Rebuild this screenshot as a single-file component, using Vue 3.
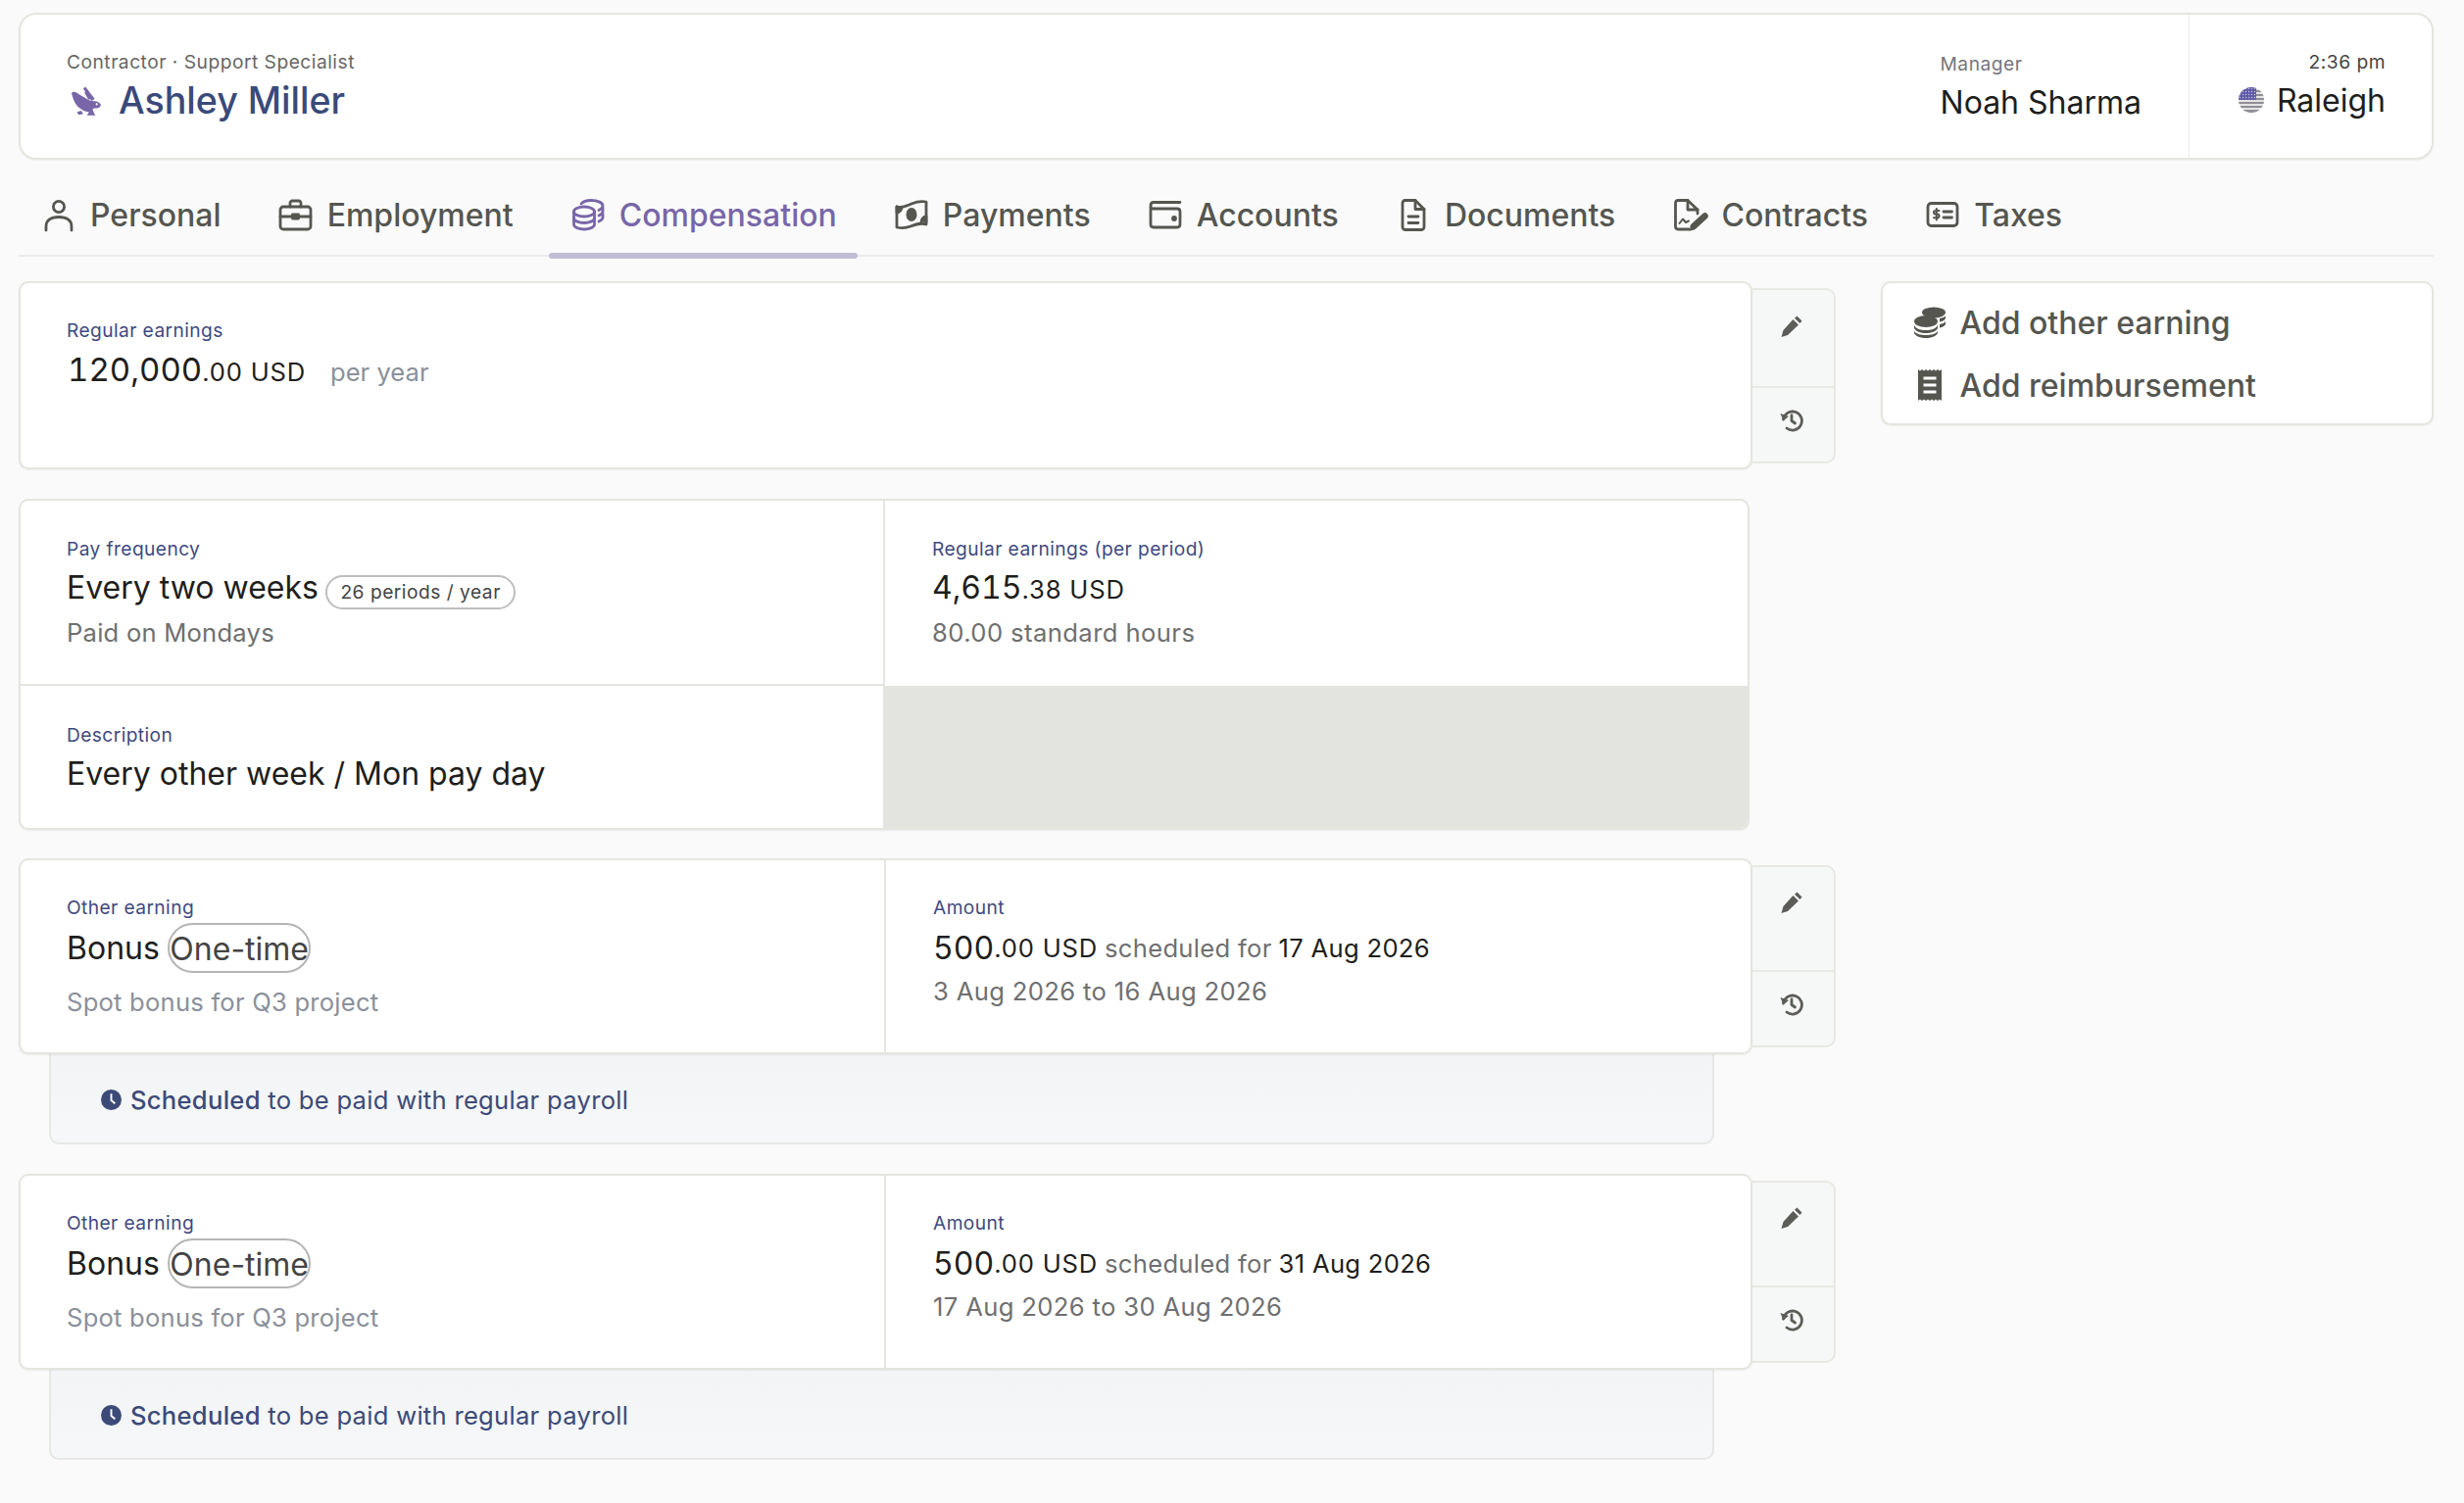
<script setup>
const tabs = [
  { label: 'Personal', icon: 'person' },
  { label: 'Employment', icon: 'case' },
  { label: 'Compensation', icon: 'coins', active: true },
  { label: 'Payments', icon: 'money' },
  { label: 'Accounts', icon: 'wallet' },
  { label: 'Documents', icon: 'file' },
  { label: 'Contracts', icon: 'sign' },
  { label: 'Taxes', icon: 'tax' }
]
const bonuses = [
  { date: '17 Aug 2026', range: '3 Aug 2026 to 16 Aug 2026' },
  { date: '31 Aug 2026', range: '17 Aug 2026 to 30 Aug 2026' }
]
</script>

<template>
  <div class="page">
    <header class="head">
      <div class="who">
        <div class="small grey">Contractor · Support Specialist</div>
        <div class="name">
          <svg class="rabbit" viewBox="30 18 100 96" fill="#7866a8">
            <path d="M36 42 C40 35 50 37 57 44 C66 50 78 56 90 64 L104 67 C113 65 121 68 127 78 C125 86 118 90 108 88 L101 92 L107 107 L111 111 L84 111 L90 100 C78 100 64 92 54 82 C44 70 40 58 36 42 Z"/>
            <path d="M72 28 L79 22 L108 60 L98 66 Z"/>
            <path d="M76 40 L82 36 L96 60 L88 62 Z"/>
            <path d="M53 100 L66 96 L72 106 L58 109 Z"/>
            <circle cx="114" cy="76" r="3.500" fill="#fff"/>
          </svg>
          <span>Ashley Miller</span>
        </div>
      </div>
      <div class="manager">
        <div class="small muted">Manager</div>
        <div class="big">Noah Sharma</div>
      </div>
      <div class="place">
        <div class="small dark">2:36 pm</div>
        <div class="city">
          <svg class="flag" viewBox="0 0 26 26">
            <defs>
              <clipPath id="flagc"><circle cx="13" cy="13" r="13"/></clipPath>
              <pattern id="stars" width="3" height="3" patternUnits="userSpaceOnUse">
                <rect width="3" height="3" fill="#5f5aa6"/>
                <circle cx="1.500" cy="1.500" r=".7" fill="#c9c8e0"/>
              </pattern>
            </defs>
            <g clip-path="url(#flagc)">
              <rect width="26" height="26" fill="#e4e4e4"/>
              <rect y="3" width="26" height="2" fill="#8f8f96"/>
              <rect y="7" width="26" height="2" fill="#8f8f96"/>
              <rect y="11" width="26" height="2" fill="#8f8f96"/>
              <rect y="15" width="26" height="2" fill="#8f8f96"/>
              <rect y="19" width="26" height="2" fill="#8f8f96"/>
              <rect y="23" width="26" height="3" fill="#8f8f96"/>
              <rect width="18" height="13" fill="url(#stars)"/>
            </g>
          </svg>
          <span>Raleigh</span>
        </div>
      </div>
    </header>

    <nav class="tabs">
      <div v-for="t in tabs" :key="t.label" class="tab" :class="{ active: t.active }">
        <svg class="tabicon" viewBox="0 0 32 32" fill="none" stroke="currentColor" stroke-width="2.800" stroke-linecap="round" stroke-linejoin="round">
          <template v-if="t.icon === 'person'">
            <circle cx="16" cy="8" r="5.600"/>
            <path d="M3 32 V28 C3 22 8 18.500 16 18.500 C24 18.500 29 22 29 28 V32"/>
          </template>
          <template v-else-if="t.icon === 'case'">
            <rect x="0" y="8" width="31" height="23" rx="3"/>
            <path d="M10 8 V4 C10 3 11 2 12 2 H19 C20 2 21 3 21 4 V8"/>
            <path d="M0 18 H12 M19 18 H31"/>
            <rect x="12.500" y="16" width="6" height="4" fill="currentColor"/>
          </template>
          <template v-else-if="t.icon === 'coins'">
            <ellipse cx="12" cy="13" rx="10.500" ry="5"/>
            <path d="M1.500 13 V26 C1.500 29 7 31 12 31 C17 31 22.500 29 22.500 26 V13"/>
            <path d="M1.500 19.500 C1.500 22.500 7 24.500 12 24.500 C17 24.500 22.500 22.500 22.500 19.500"/>
            <path d="M9 5 C11 2.500 15 1.500 19 1.500 C26 1.500 31 4 31 7 C31 9 29 10.500 27 11.500"/>
            <path d="M31 9 V13 C31 15 29 16 27 17 M31 15 V19 C31 21 29 22 27 23"/>
          </template>
          <template v-else-if="t.icon === 'money'">
            <path d="M1 8 C7 10 11 7 16 5 C21 3 26 2 31 3 V26 C25 24 20 26 15 28 C10 30 6 30 1 29 Z"/>
            <ellipse cx="16" cy="16" rx="5.500" ry="7" fill="currentColor" stroke="none"/>
            <path d="M1 8 L1 14 C4 14 6 11 6 8.500 M31 24 L31 18 C28 18 26 21 26 23.500" fill="currentColor"/>
          </template>
          <template v-else-if="t.icon === 'wallet'">
            <path d="M1 7 V26 C1 28 2.500 29 4 29 H28 C30 29 31 28 31 26 V13 C31 11 30 10 28 10 H3.500 C2 10 1 9 1 7 C1 5 2 3.500 4 3.500 H31"/>
            <circle cx="25" cy="20" r="1.500" fill="currentColor"/>
          </template>
          <template v-else-if="t.icon === 'file'">
            <path d="M5 4.500 C5 3 6 1.500 7.500 1.500 H18 L27 10.500 V28.500 C27 30 26 31.500 24.500 31.500 H7.500 C6 31.500 5 30 5 28.500 Z"/>
            <path d="M18 1.500 V10.500 H27"/>
            <path d="M11 18 H21 M11 24.500 H21"/>
          </template>
          <template v-else-if="t.icon === 'sign'">
            <path d="M15 31 H4 C2.500 31 1.500 30 1.500 28.500 V4 C1.500 2.500 2.500 1.500 4 1.500 H14 L24 11 V15"/>
            <path d="M14 1.500 V11 H24"/>
            <path d="M5.500 25 L9 20.500 L12 24 L15 22.500" stroke-width="2"/>
            <path d="M20 28 L31.500 17.500" stroke-width="6.500" stroke-linecap="round"/>
            <path d="M15.500 33 L17 27 L21.500 31 Z" fill="currentColor" stroke="none"/>
          </template>
          <template v-else>
            <rect x="1" y="4.500" width="30" height="23" rx="3.500"/>
            <path d="M12.500 12 H9 C7.800 12 7 12.600 7 13.800 C7 15 7.800 15.600 9 15.600 H10.500 C11.700 15.600 12.500 16.200 12.500 17.400 C12.500 18.600 11.700 19.200 10.500 19.200 H7 M9.800 10 V21.500" stroke-width="2"/>
            <path d="M17 13 H25.500 M17 19 H25.500" stroke-width="2.800"/>
          </template>
        </svg>
        <span>{{ t.label }}</span>
      </div>
    </nav>

    <div class="content">
      <main class="main">
        <section class="row">
          <div class="card first">
            <div class="cell">
              <div class="label">Regular earnings</div>
              <div class="value"><span class="num large">120,000</span><span class="minor">.00 USD</span><span class="per">per year</span></div>
            </div>
          </div>
          <div class="actions">
            <div class="act pen-first"><svg class="act-icon" viewBox="0 0 24 24" fill="#5c5c58"><path d="M17.500 1.500 L22.500 6.500 L20.500 9 L15 3.800 Z M13.500 5 L19 10.500 L8 21 L1.500 23 L3.500 16 Z"/></svg></div>
            <div class="act his"><svg class="act-icon" viewBox="0 0 24 24" fill="none" stroke="#5c5c58" stroke-width="2.800" stroke-linecap="round"><path d="M3.500 11 A9.500 9.500 0 1 1 7 20"/><path d="M12 7 V12.500 L15.500 15"/><path d="M0.500 5 L3.500 12.500 L9 8 Z" stroke="none" fill="#5c5c58"/></svg></div>
          </div>
        </section>

        <section class="card pay">
          <div class="cell top right-line bottom-line">
            <div class="label">Pay frequency</div>
            <div class="value">Every two weeks <span class="pill">26 periods / year</span></div>
            <div class="sub close">Paid on Mondays</div>
          </div>
          <div class="cell top amount">
            <div class="label">Regular earnings (per period)</div>
            <div class="value"><span class="num">4,615</span><span class="minor">.38 USD</span></div>
            <div class="sub closer">80.00 standard hours</div>
          </div>
          <div class="cell low right-line">
            <div class="label">Description</div>
            <div class="value">Every other week / Mon pay day</div>
          </div>
          <div class="blank"></div>
        </section>

        <section v-for="b in bonuses" :key="b.date" class="bonus">
          <div class="row">
            <div class="card split">
              <div class="cell tall right-line">
                <div class="label">Other earning</div>
                <div class="value v-tall">Bonus <span class="once">One-time</span></div>
                <div class="sub note">Spot bonus for Q3 project</div>
              </div>
              <div class="cell tall amount">
                <div class="label">Amount</div>
                <div class="value v-tall"><span class="num">500</span><span class="minor">.00 USD</span><span class="for">scheduled for</span><span class="when">{{ b.date }}</span></div>
                <div class="sub near">{{ b.range }}</div>
              </div>
            </div>
            <div class="actions">
              <div class="act pen-next"><svg class="act-icon" viewBox="0 0 24 24" fill="#5c5c58"><path d="M17.500 1.500 L22.500 6.500 L20.500 9 L15 3.800 Z M13.500 5 L19 10.500 L8 21 L1.500 23 L3.500 16 Z"/></svg></div>
              <div class="act his"><svg class="act-icon" viewBox="0 0 24 24" fill="none" stroke="#5c5c58" stroke-width="2.800" stroke-linecap="round"><path d="M3.500 11 A9.500 9.500 0 1 1 7 20"/><path d="M12 7 V12.500 L15.500 15"/><path d="M0.500 5 L3.500 12.500 L9 8 Z" stroke="none" fill="#5c5c58"/></svg></div>
            </div>
          </div>
          <div class="notice">
            <svg class="clock" viewBox="0 0 22 22"><circle cx="11" cy="11" r="11" fill="#3c4a78"/><path d="M11 4.500 V11.500 L15 15" fill="none" stroke="#fff" stroke-width="2"/></svg>
            <span><b>Scheduled</b> to be paid with regular payroll</span>
          </div>
        </section>
      </main>

      <aside class="side">
        <div class="side-item">
          <svg class="side-icon" viewBox="0 0 34 32" fill="#555650">
            <ellipse cx="21" cy="6" rx="12" ry="5.500"/>
            <ellipse cx="13" cy="15" rx="12" ry="6"/>
            <path d="M1 19 C3 23 8 24 13 24 C18 24 23 23 25 19 V22 C24 25 18 27 13 27 C8 27 2 25 1 22 Z"/>
            <path d="M1 25 C3 28 8 29 13 29 C18 29 23 28 25 25 V27 C24 30 18 32 13 32 C8 32 2 30 1 27 Z"/>
            <path d="M27 12 C30 11.500 32 10.500 33 9.500 V12 C32 14 30 15 27 15.500 Z M27 18 C30 17.500 32 16.500 33 15 V18 C32 20 30 21 27 21.500 Z"/>
          </svg>
          <span>Add other earning</span>
        </div>
        <div class="side-item">
          <svg class="side-icon" viewBox="0 0 34 32" fill="#555650">
            <path d="M5 0 L7 1.500 L9 0 L11 1.500 L13 0 L15 1.500 L17 0 L19 1.500 L21 0 L23 1.500 L25 0 L27 1.500 L29 0 V32 L27 30.500 L25 32 L23 30.500 L21 32 L19 30.500 L17 32 L15 30.500 L13 32 L11 30.500 L9 32 L7 30.500 L5 32 Z"/>
            <path d="M10.500 9 H23.500 M10.500 16 H23.500 M10.500 23 H23.500" stroke="#fff" stroke-width="2.800"/>
          </svg>
          <span>Add reimbursement</span>
        </div>
      </aside>
    </div>
  </div>
</template>

<style>
html, body { margin: 0; background: #fafafa; }
</style>

<style scoped>
.page {
  box-sizing: border-box;
  width: 2514px;
  height: 1534px;
  padding: 13px 31px 0 19px;
  font-family: Inter, "Liberation Sans", sans-serif;
  color: #1e1e1c;
  background: #fafafa;
  overflow: hidden;
}
.head {
  display: flex;
  height: 150px;
  box-sizing: border-box;
  background: #fff;
  border: 2px solid #e5e5e0;
  border-radius: 18px;
  box-shadow: 0 1px 2px rgba(0,0,0,.05);
}
.small { font-size: 19.2px; line-height: 24px; letter-spacing: .5px; }
.grey { color: #666; }
.muted { color: #76767a; }
.dark { color: #444; }
.big { font-size: 32px; line-height: 40px; margin-top: 8px; }
.who { flex: 1; padding: 36px 0 0 47px; }
.name {
  display: flex;
  align-items: center;
  gap: 17px;
  font-size: 37.6px;
  font-weight: 500;
  line-height: 46px;
  color: #3a4a7a;
  margin-top: 5px;
}
.rabbit { width: 33px; height: 32px; margin-left: 3px; }
.manager { padding: 38px 48px 0 0; }
.place {
  width: 248px;
  box-sizing: border-box;
  padding: 36px 47px 0 0;
  border-left: 1px solid #ececea;
  text-align: right;
}
.city {
  display: flex;
  justify-content: flex-end;
  align-items: center;
  gap: 13px;
  font-size: 32px;
  line-height: 40px;
  margin-top: 8px;
}
.flag { width: 26px; height: 26px; margin-top: -2px; }
.tabs {
  display: flex;
  gap: 15.100px;
  height: 99px;
  box-sizing: border-box;
  padding-left: 1px;
  border-bottom: 2px solid #ebebed;
}
.tab {
  display: flex;
  align-items: center;
  gap: 16px;
  height: 97px;
  box-sizing: border-box;
  padding: 15px 21px 0 24px;
  font-size: 32px;
  font-weight: 500;
  color: #555650;
  position: relative;
}
.tab.active { color: #7866a8; }
.tab.active::after {
  content: "";
  position: absolute;
  left: 0;
  right: 0;
  bottom: -4px;
  height: 6px;
  border-radius: 3px;
  background: #c1bdd3;
}
.tabicon { width: 32px; height: 32px; flex: none; overflow: visible; }
.content { display: flex; gap: 46px; padding-top: 25px; }
.main { width: 1854px; display: flex; flex-direction: column; gap: 29px; }
.side {
  width: 564px;
  height: 147px;
  box-sizing: border-box;
  padding: 8px 0 0 31px;
  background: #fff;
  border: 2px solid #e5e5e0;
  border-radius: 10px;
  box-shadow: 0 1px 2px rgba(0,0,0,.05);
}
.side-item {
  display: flex;
  align-items: center;
  gap: 13.500px;
  height: 64px;
  font-size: 32px;
  font-weight: 500;
  color: #555650;
}
.side-icon { width: 34px; height: 32px; flex: none; }
.row { display: flex; align-items: flex-start; }
.card {
  box-sizing: border-box;
  background: #fff;
  border: 2px solid #e5e5e0;
  border-radius: 10px;
  box-shadow: 0 1px 2px rgba(0,0,0,.06);
  position: relative;
  z-index: 1;
  overflow: hidden;
}
.first { width: 1769px; height: 192px; }
.pay {
  width: 1766px;
  margin-top: 1px;
  display: grid;
  grid-template-columns: 882px 1fr;
  grid-template-rows: 189px 145px;
}
.split {
  width: 1769px;
  height: 200px;
  display: grid;
  grid-template-columns: 883px 1fr;
}
.cell { box-sizing: border-box; padding: 38px 0 0 47px; }
.cell.top { padding-top: 39px; }
.cell.low { padding-top: 40px; }
.amount { padding-left: 48px; }
.right-line { border-right: 2px solid #e5e5e0; }
.bottom-line { border-bottom: 2px solid #e5e5e0; }
.blank { background: #e3e4df; }
.label { font-size: 19.2px; line-height: 20px; letter-spacing: .4px; color: #3f4a80; }
.value {
  font-size: 32px;
  line-height: 60px;
  color: #1e1e1c;
  white-space: nowrap;
}
.v-tall { line-height: 64px; height: 64px; display: flex; align-items: center; }
.sub { font-size: 25.6px; line-height: 34px; color: #6f6f6f; letter-spacing: .22px; }
.amount .sub { letter-spacing: .42px; }
.close { margin-top: -1px; }
.closer { margin-top: -3px; }
.note { margin-top: 6px; color: #8a909a; }
.near { line-height: 24px; }
.amount .near { letter-spacing: .36px; }
.num { font-size: 32px; font-variant-numeric: tabular-nums; }
.num.large { font-size: 33px; margin-left: 1px; }
.minor { font-size: 25.6px; letter-spacing: .8px; }
.per { font-size: 25.6px; color: #8a909a; letter-spacing: 0; margin-left: 25px; }
.for { font-size: 25.6px; color: #6f6f6f; letter-spacing: .3px; margin: 0 7px 0 7px; }
.when { font-size: 25.6px; letter-spacing: .3px; }
.pill {
  display: inline-block;
  box-sizing: border-box;
  height: 35px;
  line-height: 31px;
  padding: 0 13px;
  margin-left: -1.500px;
  font-size: 19.2px;
  letter-spacing: .5px;
  color: #444;
  border: 2px solid #bdbdbd;
  border-radius: 18px;
  vertical-align: .5px;
}
.once {
  display: inline-block;
  box-sizing: border-box;
  height: 51px;
  line-height: 49px;
  margin: 0 0 2px 8.500px;
  color: #444;
  border: 2px solid #b5b5b5;
  border-radius: 26px;
}
.bonus + .bonus { margin-top: 1px; }
.actions {
  width: 85px;
  margin-top: 7px;
  box-sizing: border-box;
  background: #f6f7f7;
  border: 2px solid #e8e8e4;
  border-left: 0;
  border-radius: 0 10px 10px 0;
}
.act { display: flex; justify-content: center; box-sizing: border-box; }
.pen-first { height: 100px; padding-top: 25px; border-bottom: 2px solid #e8e8e4; }
.pen-next { height: 107px; padding-top: 24px; border-bottom: 2px solid #e8e8e4; }
.his { height: 75px; padding-top: 21px; }
.act-icon { width: 24px; height: 24px; margin-right: 3px; }
.notice {
  box-sizing: border-box;
  height: 92px;
  margin: 0 124px 0 31px;
  padding-top: 2px;
  display: flex;
  align-items: center;
  gap: 9px;
  padding-left: 51px;
  font-size: 25.6px;
  letter-spacing: .28px;
  color: #3c4a78;
  background: linear-gradient(#f2f4f5, #f5f7f9);
  border: 2px solid #e6e8e6;
  border-top: 0;
  border-radius: 0 0 10px 10px;
}
.notice b { font-weight: 500; }
.clock { width: 21px; height: 21px; flex: none; }
</style>
